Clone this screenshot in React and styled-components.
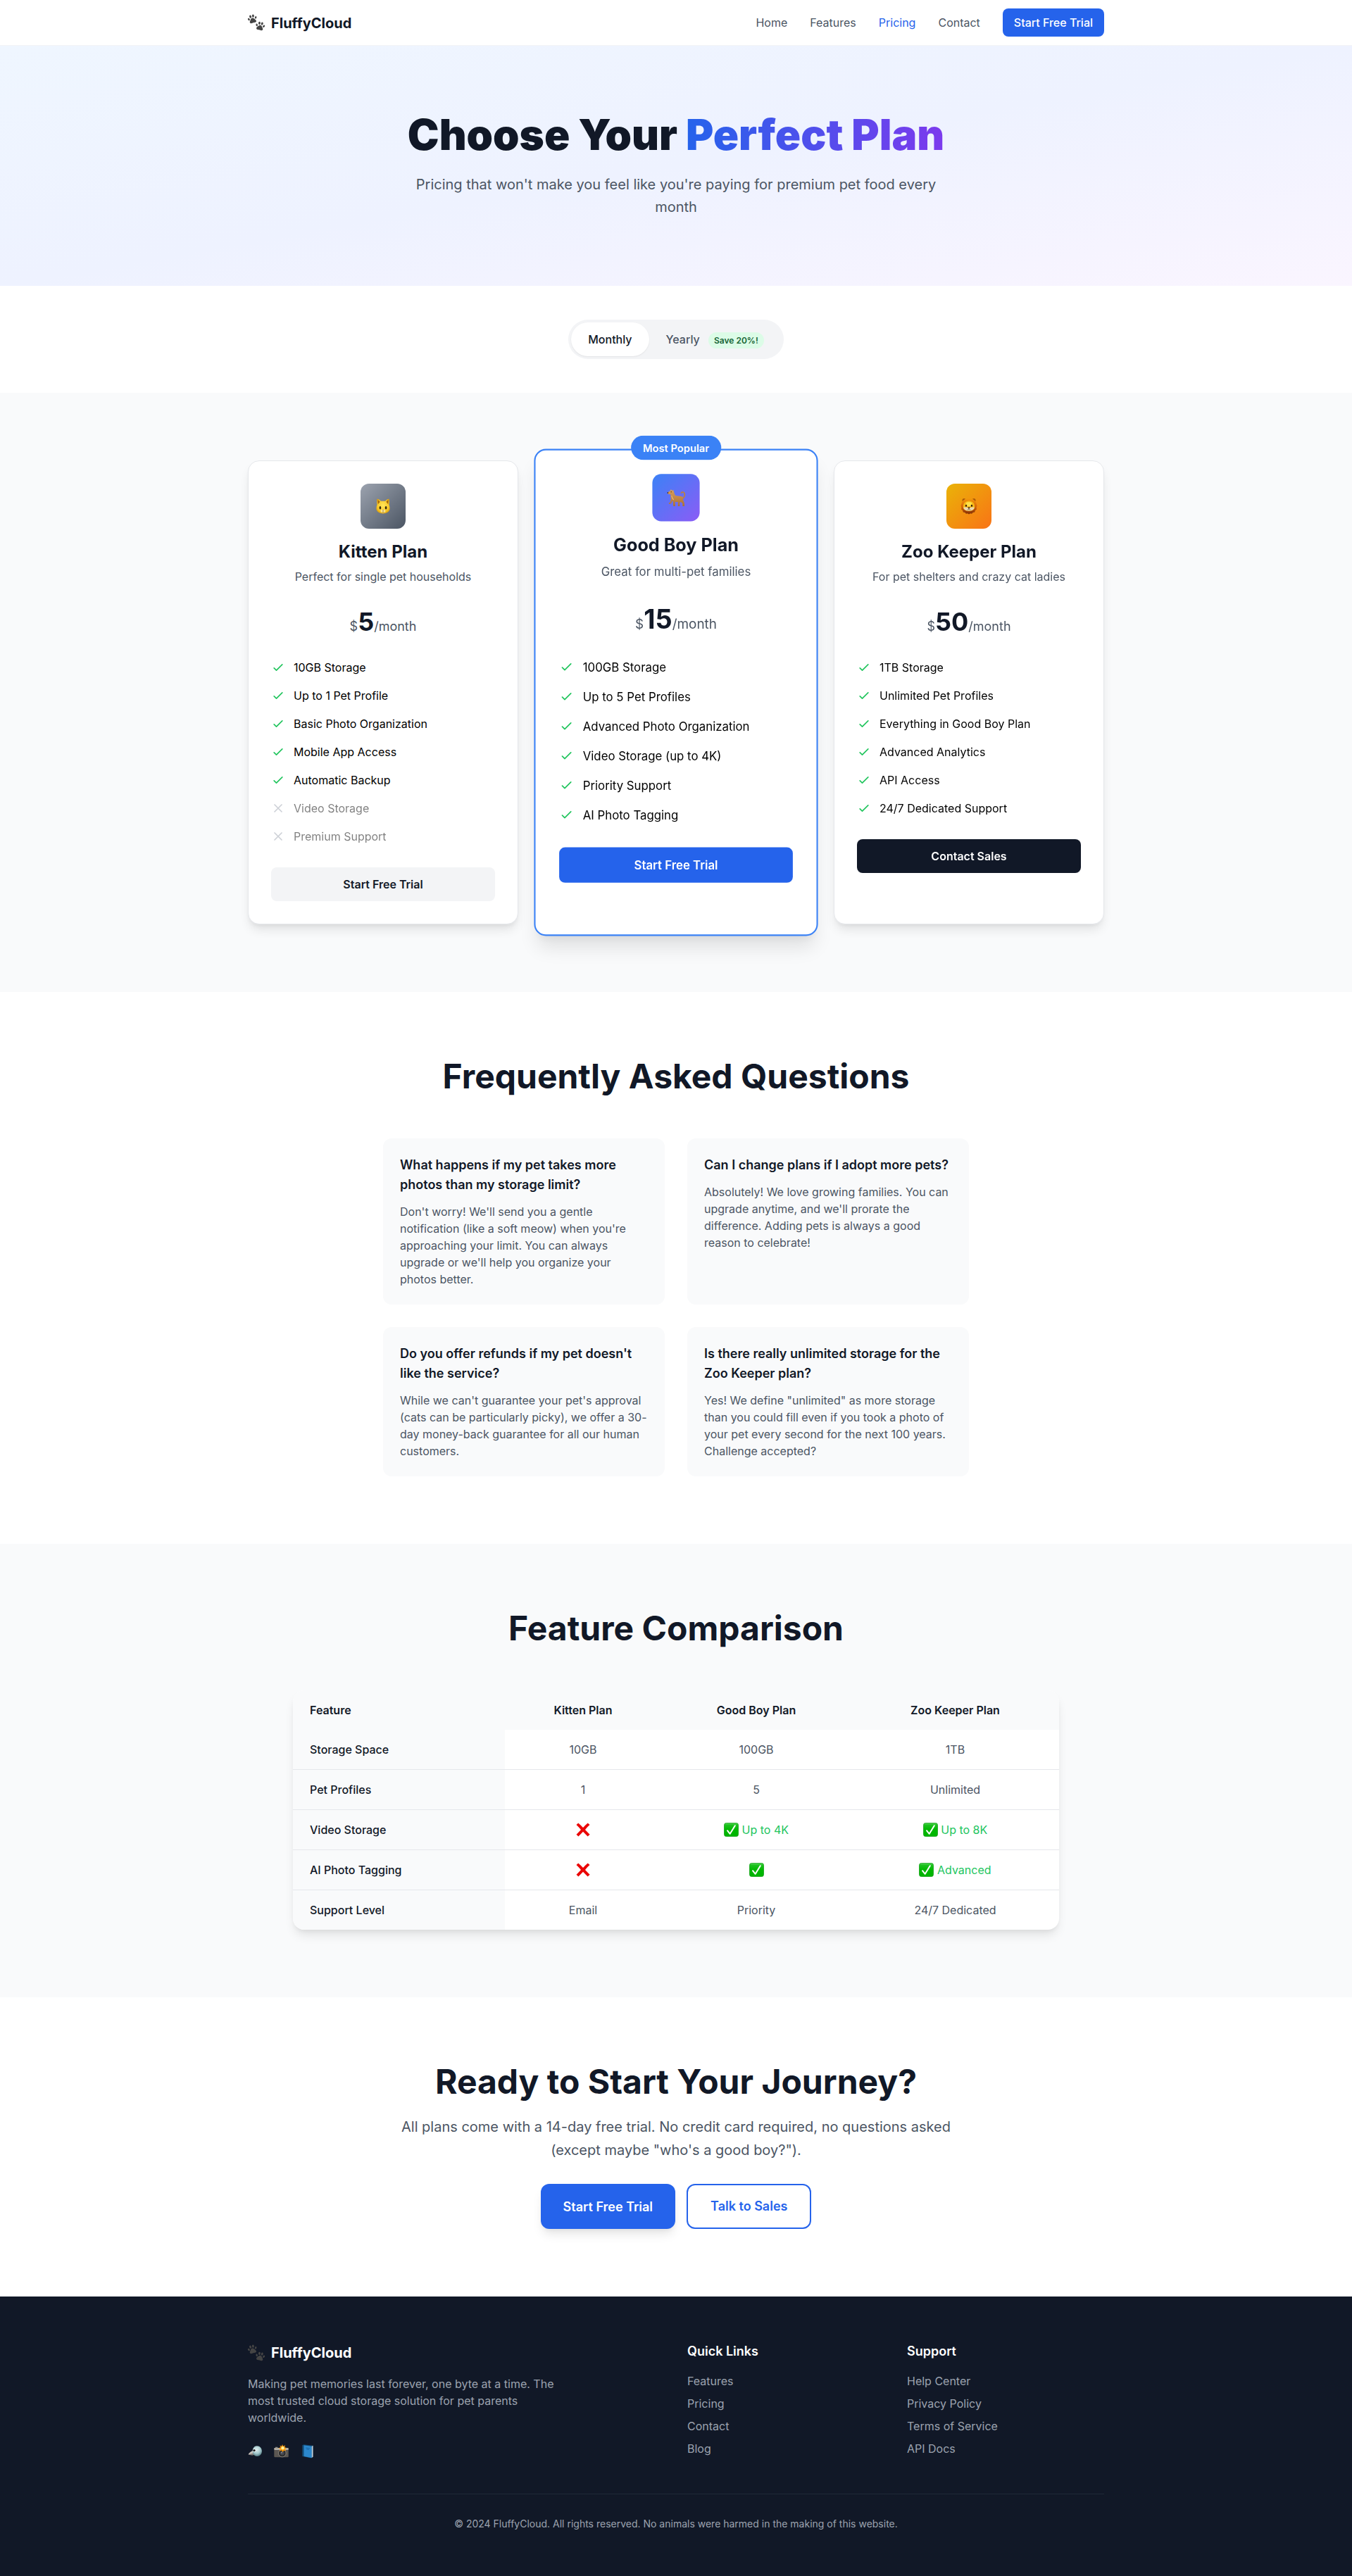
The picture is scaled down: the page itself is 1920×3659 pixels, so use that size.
import React, { useState } from "react";
import styled, { createGlobalStyle, css } from "styled-components";

const c = {
  ink: "#111827",
  body: "#4b5563",
  muted: "#9ca3af",
  line: "#e5e7eb",
  soft: "#f3f4f6",
  tint: "#f9fafb",
  blue: "#2563eb",
  sky: "#3b82f6",
  green: "#22c55e",
};

const GlobalStyle = createGlobalStyle`
  *, *::before, *::after { box-sizing: border-box; margin: 0; padding: 0; }
  body {
    margin: 0;
    background: #fff;
    color: #000;
    font-family: Inter, "Liberation Sans", sans-serif;
    font-size: 16px;
    line-height: 24px;
  }
  a { color: inherit; text-decoration: none; }
  ul { list-style: none; }
  svg { display: block; flex-shrink: 0; }
`;

/* ---------- shared ---------- */

const Container = styled.div`
  width: 100%;
  max-width: ${(p) => p.$max || 1280}px;
  margin: 0 auto;
  padding: 0 32px;
`;

const Section = styled.section`
  padding: 96px 0;
  background: ${(p) => (p.$tinted ? c.tint : "#fff")};
`;

const SectionTitle = styled.h2`
  font-size: 48px;
  line-height: 48px;
  font-weight: 700;
  color: ${c.ink};
  text-align: center;
  margin-bottom: ${(p) => p.$gap || 64}px;
`;

const Lead = styled.p`
  max-width: ${(p) => p.$max}px;
  margin: 0 auto;
  font-size: 20px;
  line-height: 32.5px;
  color: ${c.body};
  text-align: center;
`;

/* ---------- pictograms ---------- */

const Paw = ({ transform }) => (
  <g transform={transform}>
    <ellipse cx="-5.2" cy="-0.6" rx="1.25" ry="1.8" transform="rotate(-22 -5.2 -0.6)" />
    <ellipse cx="-2.2" cy="-3.9" rx="1.45" ry="2.05" transform="rotate(-8 -2.2 -3.9)" />
    <ellipse cx="1.7" cy="-4.1" rx="1.45" ry="2.05" transform="rotate(8 1.7 -4.1)" />
    <ellipse cx="4.9" cy="-1.2" rx="1.25" ry="1.8" transform="rotate(24 4.9 -1.2)" />
    <path d="M-.1-1.5c1.800 0 2.700 1.500 3.500 2.700.9 1.200 1.600 2.100 1.200 3.200-.5 1.400-2 1.300-3.300 1-.9-.2-1.700-.2-2.600.1-1.400.4-2.900.2-3.300-1.100-.4-1.300.4-2.100 1.200-3.200C-2.600.1-1.900-1.500-.1-1.500z" />
  </g>
);

const Paws = () => (
  <svg width="24" height="24" viewBox="0 0 24 24" fill="#454545">
    <Paw transform="translate(6.6 7) rotate(-12)" />
    <Paw transform="translate(17.6 17.2) rotate(14)" />
  </svg>
);

const CatFace = () => (
  <svg width="20" height="24" viewBox="0 0 20 24">
    <defs>
      <radialGradient id="catFur" cx="50%" cy="45%" r="60%">
        <stop offset="0" stopColor="#ffe65c" />
        <stop offset=".7" stopColor="#f9c927" />
        <stop offset="1" stopColor="#d99a0c" />
      </radialGradient>
    </defs>
    <path d="M1.500 1.500c2 .3 4 1.500 5.200 3.300h6.600C14.500 3 16.500 1.800 18.500 1.500c.6 3 .4 6-.1 8.500 1 2 1.300 4.500 1.100 6.800-1.300 3.600-5 5.700-9.500 5.700S1.800 20.400.5 16.800C.3 14.500.6 12 1.600 10 1.100 7.500.9 4.500 1.500 1.500z" fill="url(#catFur)" />
    <path d="M2.500 3.300c1.300.5 2.500 1.500 3 2.700L2.800 9.200c-.4-2-.5-4-.3-5.900zM17.500 3.300c-1.300.5-2.500 1.500-3 2.700l2.700 3.200c.4-2 .5-4 .3-5.900z" fill="#a8690d" />
    <ellipse cx="5.900" cy="14.300" rx="1.300" ry="2.200" fill="#33270f" />
    <ellipse cx="14.100" cy="14.300" rx="1.300" ry="2.200" fill="#33270f" />
    <ellipse cx="10" cy="19" rx="3.400" ry="2.300" fill="#ffe88c" />
    <path d="M8.700 17.200h2.600L10 18.800z" fill="#8d6a6a" />
    <path d="M10 18.800v1.200M8.300 20.400c.8.4 1.400.1 1.700-.4.3.5.900.8 1.700.4" stroke="#7c5d2b" strokeWidth=".6" fill="none" />
  </svg>
);

const Dog = () => (
  <svg width="25" height="25" viewBox="0 0 25 25">
    <defs>
      <linearGradient id="dogCoat" x1="0" y1="0" x2="0" y2="1">
        <stop offset="0" stopColor="#dba05a" />
        <stop offset="1" stopColor="#ab6f35" />
      </linearGradient>
    </defs>
    <path d="M20.500 13.500c3-1.500 4.300-5.500 2.600-8-1-1.500-3.200-1.500-4 .1" stroke="#bd8040" strokeWidth="1.700" strokeLinecap="round" fill="none" />
    <path d="M5.200.700l1.700 2 1.500-1.300.8 3.100c.6 1.600 1 3.300 2 4.600 2.400 1 5.600.6 8.300 1.100 1.600.4 2.300 1.900 2 3.700-.2 1.500.7 2.800 1.400 4.300.6 1.600.6 3.500.5 5.300h-2.500l-.1-3.600-2.700-2.300-1.200 2 .3 3.900h-2.600l.1-5.700c-1.300.2-2.600.1-3.900-.2l.2 5.900H8.400l-.5-6.500-1-.5-1.400 3.400-2.900.8-.3-1.600 1.900-.7 1-4.600c-.5-2-.5-3.800-.3-5.800L1.200 7.100.3 5.100l3.600-1.900z" fill="url(#dogCoat)" />
    <circle cx="5.500" cy="4.200" r=".55" fill="#2b1a0b" />
    <circle cx=".9" cy="5.400" r=".8" fill="#3a2412" />
    <path d="M6 9.500c.5 2.200 1.300 4.100 2.800 5.500" stroke="#e6b676" strokeWidth="1.100" fill="none" />
  </svg>
);

const Lion = () => (
  <svg width="24" height="24" viewBox="0 0 24 24">
    <defs>
      <linearGradient id="mane" x1="0" y1="0" x2="0" y2="1">
        <stop offset="0" stopColor="#f49a0b" />
        <stop offset=".5" stopColor="#d9660a" />
        <stop offset="1" stopColor="#7d2c05" />
      </linearGradient>
    </defs>
    <circle cx="5" cy="3.600" r="2.500" fill="#a85a0a" />
    <circle cx="19" cy="3.600" r="2.500" fill="#a85a0a" />
    <path d="M12 .800c5.500 0 9.600 3.300 10.400 7.200l1.100 3.500-.9 2.300.3 2.600-2 1.600-.7 2.500-2.600.5-1.500 1.800-2.200-.6L12 23.600l-1.900-1.400-2.200.6-1.500-1.800-2.600-.5-.7-2.500-2-1.600.3-2.600-.9-2.300L1.600 8C2.400 4.100 6.500.8 12 .800z" fill="url(#mane)" />
    <path d="M12 4.500c4.900 0 8.200 3.600 8.200 8.200 0 3.900-3.300 6.300-8.200 6.300s-8.200-2.400-8.200-6.300C3.800 8.100 7.100 4.500 12 4.500z" fill="#f7b917" />
    <path d="M7.500 7.500C9 5.900 15 5.900 16.500 7.500L14 12h-4z" fill="#ffe04a" />
    <path d="M4.300 13.700c2.200-.6 5 .2 7.700.2s5.500-.8 7.700-.2c-.6 3.300-3.700 4.900-7.700 4.900s-7.100-1.600-7.700-4.900z" fill="#ead9b4" />
    <ellipse cx="8" cy="11.300" rx="1.100" ry="1.500" fill="#2d1a08" />
    <ellipse cx="16" cy="11.300" rx="1.100" ry="1.500" fill="#2d1a08" />
    <path d="M10 13.600h4l-2 2.300z" fill="#40240f" />
    <path d="M12 15.600v1.100M9.500 17c1 .6 2 .4 2.500-.4.500.8 1.500 1 2.500.4" stroke="#6b4a2c" strokeWidth=".7" fill="none" />
  </svg>
);

const CrossMark = () => (
  <svg width="20" height="20" viewBox="0 0 20 20">
    <path d="M3.200.400C5.400 2.300 7.800 4.600 10 7 12.200 4.500 14.500 2.200 16.700.400L19.500 3c-2.300 2-4.600 4.400-6.500 7 2.200 2.300 4.600 4.600 6.600 6.700l-3 2.900C14.600 17.500 12.200 15 10 12.700 7.800 15 5.500 17.500 3.400 19.600L.5 16.800C2.500 14.700 4.800 12.400 7 10 4.900 7.600 2.600 5.200.5 3.100z" fill="#ea0606" />
  </svg>
);

const TickBox = () => (
  <svg width="21" height="20" viewBox="0 0 21 20">
    <defs>
      <linearGradient id="tickFill" x1="0" y1="0" x2="0" y2="1">
        <stop offset="0" stopColor="#58d65a" />
        <stop offset=".16" stopColor="#1cc11e" />
        <stop offset=".5" stopColor="#00b800" />
        <stop offset="1" stopColor="#00b300" />
      </linearGradient>
    </defs>
    <rect x=".5" y=".4" width="20" height="19.200" rx="3" fill="url(#tickFill)" stroke="#12a015" strokeWidth=".8" />
    <path d="M5 11.200l3.700 4.600L15.800 4.200" stroke="#fff" strokeWidth="2" strokeLinecap="round" strokeLinejoin="round" fill="none" />
  </svg>
);

const Bird = () => (
  <svg width="21" height="20" viewBox="0 0 21 20">
    <defs>
      <radialGradient id="birdHead" cx="45%" cy="35%" r="65%">
        <stop offset="0" stopColor="#dff0f0" />
        <stop offset=".6" stopColor="#a4c8cc" />
        <stop offset="1" stopColor="#547d84" />
      </radialGradient>
    </defs>
    <path d="M7.500 8.500C4.500 9.800 2 12 .6 14.300c2.300.9 5.600 1.300 8.600.4z" fill="#c9c3bd" />
    <path d="M.6 14.300c2.600-.4 5-.9 7.500-1.800l.8 2.300c-2.900.8-6 .4-8.300-.5z" fill="#837c77" />
    <path d="M12.800 2.200c4.300 0 7.200 3.300 7.200 7.300 0 4.300-2.900 7.500-7 7.500-3.400 0-6.300-2.700-6.300-7.200 0-4.300 2.400-7.600 6.100-7.600z" fill="url(#birdHead)" />
    <circle cx="9.300" cy="8.500" r="2.300" fill="#fff" />
    <circle cx="9" cy="8.600" r="1.700" fill="#1a1a1a" />
  </svg>
);

const Camera = () => (
  <svg width="21" height="20" viewBox="0 0 21 20">
    <rect x=".3" y="5" width="20.400" height="13.300" rx="1.200" fill="#5b5752" />
    <rect x=".3" y="5" width="20.400" height="3" rx="1" fill="#b6b0a6" />
    <rect x="2" y="3.800" width="3.400" height="1.800" fill="#8e8a84" />
    <circle cx="11.800" cy="12.600" r="5.300" fill="#2a2a2b" stroke="#9a958e" strokeWidth=".8" />
    <circle cx="11.800" cy="12.600" r="3" fill="#45484e" />
    <circle cx="11" cy="11.800" r="1" fill="#878c96" />
    <path d="M12 0l1.300 2.700L16 1.300l-.8 2.900 3 .7-2.400 1.700 1.300 2.600-3-.5-1.600 2.200-1.500-2.300-3 .8 1.200-2.700-2.500-1.500 2.900-.9L8.300 1.500l2.700 1.200z" fill="#ff9a0a" />
    <circle cx="12.600" cy="5.300" r="2.200" fill="#fff29a" />
  </svg>
);

const Book = () => (
  <svg width="21" height="20" viewBox="0 0 21 20">
    <path d="M3.200 1.200L5.500.300l13 1.400v16.100l-2.900 1.700L3.200 17z" fill="#12476f" />
    <path d="M16.400 3l2.100-1.300v16.100l-2.100 1.400z" fill="#c6ced6" />
    <path d="M5.500 1.200l11.100 1.600v16.400L5.500 17z" fill="#2b87cc" />
    <path d="M8.300 5l5.600.8M9.300 7l3.600.5" stroke="#175f9c" strokeWidth=".9" />
  </svg>
);

const StatusIcon = ({ included }) => (
  <svg
    width="20"
    height="20"
    viewBox="0 0 24 24"
    fill="none"
    stroke={included ? c.green : c.muted}
    strokeWidth="2"
    strokeLinecap="round"
    strokeLinejoin="round"
  >
    <path d={included ? "M5 13l4 4L19 7" : "M6 18L18 6M6 6l12 12"} />
  </svg>
);

/* ---------- navigation ---------- */

const NavBar = styled.nav`
  background: #fff;
  border-bottom: 1px solid ${c.soft};
`;

const NavInner = styled(Container)`
  height: 64px;
  display: flex;
  align-items: center;
  justify-content: space-between;
`;

const Brand = styled.a`
  display: flex;
  align-items: center;
  gap: 9px;
  height: 32px;
  font-size: 20px;
  line-height: 28px;
  font-weight: 700;
  color: ${(p) => (p.$light ? "#fff" : c.ink)};
`;

const BrandName = styled.span`
  padding-top: ${(p) => p.$drop || 0}px;
`;

const NavLinks = styled.div`
  display: flex;
  align-items: center;
  gap: 32px;
`;

const NavLink = styled.a`
  color: ${(p) => (p.$active ? c.blue : c.body)};
`;

const NavButton = styled.a`
  padding: 8px 16px;
  border-radius: 8px;
  background: ${c.blue};
  color: #fff;
  font-weight: 500;
`;

/* ---------- hero ---------- */

const Hero = styled.header`
  padding: 96px 0 95.5px;
  background: linear-gradient(to bottom right, #eff6ff, #eef2ff, #faf5ff);
`;

const HeroTitle = styled.h1`
  font-size: 60px;
  line-height: 60px;
  font-weight: 900;
  color: ${c.ink};
  text-align: center;
  margin-bottom: 24.5px;
`;

const GradientText = styled.span`
  background: linear-gradient(to right, #2563eb, #7c3aed);
  -webkit-background-clip: text;
  background-clip: text;
  color: transparent;
`;

/* ---------- billing toggle ---------- */

const BillingSection = styled.section`
  display: flex;
  justify-content: center;
  padding: 48px 0;
`;

const Toggle = styled.div`
  display: flex;
  padding: 4px;
  border-radius: 28px;
  background: ${c.soft};
`;

const ToggleOption = styled.button`
  border: 0;
  border-radius: 24px;
  padding: 12px 24px;
  font: inherit;
  font-weight: 500;
  cursor: pointer;
  background: transparent;
  color: ${c.body};
  ${(p) =>
    p.$on &&
    css`
      background: #fff;
      color: ${c.ink};
      box-shadow: 0 1px 2px rgba(0, 0, 0, 0.07);
    `}
`;

const SaveBadge = styled.span`
  margin-left: 8px;
  padding: 4px 8px;
  border-radius: 12px;
  background: #dcfce7;
  color: #166534;
  font-size: 12px;
  line-height: 16px;
  font-weight: 600;
`;

/* ---------- plans ---------- */

const PlanGrid = styled.div`
  display: grid;
  grid-template-columns: repeat(3, 1fr);
  gap: 32px;
`;

const Plan = styled.article`
  position: relative;
  padding: 32px;
  border: 1px solid ${c.line};
  border-radius: 16px;
  background: #fff;
  box-shadow: 0 10px 15px -3px rgba(0, 0, 0, 0.1), 0 4px 6px -2px rgba(0, 0, 0, 0.05);
  ${(p) =>
    p.$featured &&
    css`
      border: 2px solid ${c.sky};
      transform: scale(1.05);
      box-shadow: 0 20px 25px -5px rgba(0, 0, 0, 0.1), 0 10px 10px -5px rgba(0, 0, 0, 0.04);
    `}
`;

const RibbonWrap = styled.div`
  position: absolute;
  top: -16px;
  left: 50%;
  transform: translateX(-50%);
  white-space: nowrap;
`;

const Ribbon = styled.span`
  padding: 8px 16px;
  border-radius: 20px;
  background: ${c.sky};
  color: #fff;
  font-size: 14px;
  line-height: 20px;
  font-weight: 600;
`;

const PlanHead = styled.div`
  display: flex;
  flex-direction: column;
  align-items: center;
  text-align: center;
  margin-bottom: 32px;
`;

const PlanIcon = styled.div`
  width: 64px;
  height: 64px;
  margin-bottom: 17px;
  border-radius: 12px;
  display: flex;
  align-items: center;
  justify-content: center;
  background: linear-gradient(135deg, ${(p) => p.$from}, ${(p) => p.$to});
`;

const PlanName = styled.h3`
  font-size: 24px;
  line-height: 32px;
  font-weight: 700;
  color: ${c.ink};
  margin-bottom: 7px;
`;

const PlanNote = styled.p`
  color: ${c.body};
  margin-bottom: 32px;
`;

const Price = styled.div`
  display: flex;
  align-items: baseline;
  height: 41px;
`;

const Unit = styled.span`
  font-size: 18px;
  line-height: 28px;
  color: ${c.body};
`;

const Amount = styled.span`
  font-size: 36px;
  line-height: 40px;
  font-weight: 700;
  color: ${c.ink};
`;

const Perks = styled.ul`
  display: flex;
  flex-direction: column;
  gap: 16px;
  margin-bottom: 32px;
`;

const Perk = styled.li`
  display: flex;
  align-items: center;
  gap: 12px;
  opacity: ${(p) => (p.$off ? 0.5 : 1)};
`;

const planTones = {
  plain: css`
    background: ${c.soft};
    color: ${c.ink};
  `,
  primary: css`
    background: ${c.blue};
    color: #fff;
  `,
  dark: css`
    background: ${c.ink};
    color: #fff;
  `,
};

const PlanButton = styled.a`
  display: block;
  padding: 12px 24px;
  border-radius: 8px;
  font-weight: 600;
  text-align: center;
  ${(p) => planTones[p.$tone]}
`;

/* ---------- faq ---------- */

const FaqGrid = styled.div`
  display: grid;
  grid-template-columns: 1fr 1fr;
  gap: 32px;
`;

const FaqCard = styled.div`
  padding: 24px;
  border-radius: 12px;
  background: ${c.tint};
`;

const Question = styled.h3`
  font-size: 18px;
  line-height: 28px;
  font-weight: 600;
  color: ${c.ink};
  margin-bottom: 12px;
`;

const Answer = styled.p`
  color: ${c.body};
`;

/* ---------- comparison ---------- */

const TableCard = styled.div`
  border-radius: 16px;
  overflow: hidden;
  background: #fff;
  box-shadow: 0 10px 15px -3px rgba(0, 0, 0, 0.1), 0 4px 6px -2px rgba(0, 0, 0, 0.05);
`;

const Table = styled.table`
  width: 100%;
  table-layout: fixed;
  border-collapse: separate;
  border-spacing: 0;
`;

const Col = styled.col`
  width: ${(p) => p.$w}px;
`;

const HeadCell = styled.th`
  padding: 16px 24px;
  background: ${c.tint};
  color: ${c.ink};
  font-weight: 600;
  text-align: ${(p) => (p.$first ? "left" : "center")};
`;

const Row = styled.tr`
  &:not(:last-child) > * {
    border-bottom: 1px solid ${c.line};
  }
`;

const RowLabel = styled.th`
  padding: 16px 24px;
  background: ${c.tint};
  color: ${c.ink};
  font-weight: 500;
  text-align: left;
`;

const Cell = styled.td`
  padding: 16px 24px;
  text-align: center;
  color: ${c.body};
`;

const Mark = styled.div`
  display: flex;
  align-items: center;
  justify-content: center;
  gap: 4.5px;
  height: 24px;
  color: ${c.green};
`;

/* ---------- call to action ---------- */

const Actions = styled.div`
  display: flex;
  justify-content: center;
  gap: 16px;
  margin-top: 32px;
`;

const ActionButton = styled.a`
  display: flex;
  align-items: center;
  height: 64px;
  border-radius: 12px;
  font-size: 18px;
  line-height: 28px;
  font-weight: 600;
  ${(p) =>
    p.$outline
      ? css`
          padding: 0 32px;
          border: 2px solid ${c.blue};
          color: ${c.blue};
        `
      : css`
          padding: 1px 32px 0;
          background: ${c.blue};
          color: #fff;
          box-shadow: 0 10px 15px -3px rgba(0, 0, 0, 0.1), 0 4px 6px -2px rgba(0, 0, 0, 0.05);
        `}
`;

/* ---------- footer ---------- */

const Footer = styled.footer`
  padding: 64px 0;
  background: ${c.ink};
  color: #fff;
`;

const FooterGrid = styled.div`
  display: grid;
  grid-template-columns: repeat(4, 1fr);
  gap: 32px;
  margin-bottom: 48px;
`;

const About = styled.div`
  grid-column: span 2;
`;

const AboutText = styled.p`
  max-width: 448px;
  margin: 16px 0 24px;
  color: ${c.muted};
`;

const Socials = styled.div`
  display: flex;
  align-items: center;
  gap: 16px;
  height: 24px;
`;

const FooterHeading = styled.h4`
  font-size: 18px;
  line-height: 28px;
  font-weight: 600;
  margin-bottom: 16px;
`;

const FooterLinks = styled.ul`
  display: flex;
  flex-direction: column;
  gap: 8px;
  color: ${c.muted};
`;

const Copyright = styled.p`
  padding-top: 32px;
  border-top: 1px solid #1f2937;
  font-size: 14px;
  line-height: 20px;
  color: ${c.muted};
  text-align: center;
`;

/* ---------- data ---------- */

const plans = [
  {
    name: "Kitten Plan",
    note: "Perfect for single pet households",
    price: "5",
    icon: <CatFace />,
    from: "#9ca3af",
    to: "#4b5563",
    perks: ["10GB Storage", "Up to 1 Pet Profile", "Basic Photo Organization", "Mobile App Access", "Automatic Backup"],
    missing: ["Video Storage", "Premium Support"],
    action: "Start Free Trial",
    tone: "plain",
  },
  {
    name: "Good Boy Plan",
    note: "Great for multi-pet families",
    price: "15",
    icon: <Dog />,
    from: "#3b82f6",
    to: "#8b5cf6",
    perks: [
      "100GB Storage",
      "Up to 5 Pet Profiles",
      "Advanced Photo Organization",
      "Video Storage (up to 4K)",
      "Priority Support",
      "AI Photo Tagging",
    ],
    missing: [],
    action: "Start Free Trial",
    tone: "primary",
    ribbon: "Most Popular",
  },
  {
    name: "Zoo Keeper Plan",
    note: "For pet shelters and crazy cat ladies",
    price: "50",
    icon: <Lion />,
    from: "#eab308",
    to: "#f97316",
    perks: [
      "1TB Storage",
      "Unlimited Pet Profiles",
      "Everything in Good Boy Plan",
      "Advanced Analytics",
      "API Access",
      "24/7 Dedicated Support",
    ],
    missing: [],
    action: "Contact Sales",
    tone: "dark",
  },
];

const faqs = [
  [
    "What happens if my pet takes more photos than my storage limit?",
    "Don't worry! We'll send you a gentle notification (like a soft meow) when you're approaching your limit. You can always upgrade or we'll help you organize your photos better.",
  ],
  [
    "Can I change plans if I adopt more pets?",
    "Absolutely! We love growing families. You can upgrade anytime, and we'll prorate the difference. Adding pets is always a good reason to celebrate!",
  ],
  [
    "Do you offer refunds if my pet doesn't like the service?",
    "While we can't guarantee your pet's approval (cats can be particularly picky), we offer a 30-day money-back guarantee for all our human customers.",
  ],
  [
    "Is there really unlimited storage for the Zoo Keeper plan?",
    'Yes! We define "unlimited" as more storage than you could fill even if you took a photo of your pet every second for the next 100 years. Challenge accepted?',
  ],
];

const yes = (text) => ({ yes: true, text });
const no = { yes: false };

const comparison = [
  ["Storage Space", "10GB", "100GB", "1TB"],
  ["Pet Profiles", "1", "5", "Unlimited"],
  ["Video Storage", no, yes("Up to 4K"), yes("Up to 8K")],
  ["AI Photo Tagging", no, yes(), yes("Advanced")],
  ["Support Level", "Email", "Priority", "24/7 Dedicated"],
];

const CellContent = ({ value }) => {
  if (typeof value === "string") return value;
  return (
    <Mark>
      {value.yes ? <TickBox /> : <CrossMark />}
      {value.text && <span>{value.text}</span>}
    </Mark>
  );
};

const PlanCard = ({ plan }) => (
  <Plan $featured={!!plan.ribbon}>
    {plan.ribbon && (
      <RibbonWrap>
        <Ribbon>{plan.ribbon}</Ribbon>
      </RibbonWrap>
    )}
    <PlanHead>
      <PlanIcon $from={plan.from} $to={plan.to}>
        {plan.icon}
      </PlanIcon>
      <PlanName>{plan.name}</PlanName>
      <PlanNote>{plan.note}</PlanNote>
      <Price>
        <Unit>$</Unit>
        <Amount>{plan.price}</Amount>
        <Unit>/month</Unit>
      </Price>
    </PlanHead>
    <Perks>
      {plan.perks.map((perk) => (
        <Perk key={perk}>
          <StatusIcon included />
          <span>{perk}</span>
        </Perk>
      ))}
      {plan.missing.map((perk) => (
        <Perk key={perk} $off>
          <StatusIcon included={false} />
          <span>{perk}</span>
        </Perk>
      ))}
    </Perks>
    <PlanButton href="#" $tone={plan.tone}>
      {plan.action}
    </PlanButton>
  </Plan>
);

const LinkColumn = ({ title, links }) => (
  <div>
    <FooterHeading>{title}</FooterHeading>
    <FooterLinks>
      {links.map((l) => (
        <li key={l}>
          <a href="#">{l}</a>
        </li>
      ))}
    </FooterLinks>
  </div>
);

export default function App() {
  const [yearly, setYearly] = useState(false);
  return (
    <>
      <GlobalStyle />
      <NavBar>
        <NavInner>
          <Brand href="#">
            <Paws />
            <BrandName $drop={2}>FluffyCloud</BrandName>
          </Brand>
          <NavLinks>
            <NavLink href="#">Home</NavLink>
            <NavLink href="#">Features</NavLink>
            <NavLink href="#" $active>
              Pricing
            </NavLink>
            <NavLink href="#">Contact</NavLink>
            <NavButton href="#">Start Free Trial</NavButton>
          </NavLinks>
        </NavInner>
      </NavBar>

      <Hero>
        <HeroTitle>
          Choose Your <GradientText>Perfect Plan</GradientText>
        </HeroTitle>
        <Lead $max={768}>
          Pricing that won't make you feel like you're paying for premium pet food every month
        </Lead>
      </Hero>

      <BillingSection>
        <Toggle>
          <ToggleOption $on={!yearly} onClick={() => setYearly(false)}>
            Monthly
          </ToggleOption>
          <ToggleOption $on={yearly} onClick={() => setYearly(true)}>
            Yearly <SaveBadge>Save 20%!</SaveBadge>
          </ToggleOption>
        </Toggle>
      </BillingSection>

      <Section $tinted>
        <Container>
          <PlanGrid>
            {plans.map((p) => (
              <PlanCard key={p.name} plan={p} />
            ))}
          </PlanGrid>
        </Container>
      </Section>

      <Section>
        <Container $max={896}>
          <SectionTitle>Frequently Asked Questions</SectionTitle>
          <FaqGrid>
            {faqs.map(([q, a]) => (
              <FaqCard key={q}>
                <Question>{q}</Question>
                <Answer>{a}</Answer>
              </FaqCard>
            ))}
          </FaqGrid>
        </Container>
      </Section>

      <Section $tinted>
        <Container $max={1152}>
          <SectionTitle>Feature Comparison</SectionTitle>
          <TableCard>
            <Table>
              <colgroup>
                <Col $w={301} />
                <Col $w={222} />
                <Col $w={270} />
                <Col $w={295} />
              </colgroup>
              <thead>
                <tr>
                  <HeadCell $first>Feature</HeadCell>
                  {plans.map((p) => (
                    <HeadCell key={p.name}>{p.name}</HeadCell>
                  ))}
                </tr>
              </thead>
              <tbody>
                {comparison.map(([label, ...values]) => (
                  <Row key={label}>
                    <RowLabel>{label}</RowLabel>
                    {values.map((v, i) => (
                      <Cell key={i}>
                        <CellContent value={v} />
                      </Cell>
                    ))}
                  </Row>
                ))}
              </tbody>
            </Table>
          </TableCard>
        </Container>
      </Section>

      <Section>
        <Container $max={896}>
          <SectionTitle $gap={24}>Ready to Start Your Journey?</SectionTitle>
          <Lead $max={832}>
            All plans come with a 14-day free trial. No credit card required, no questions asked
            (except maybe "who's a good boy?").
          </Lead>
          <Actions>
            <ActionButton href="#">Start Free Trial</ActionButton>
            <ActionButton href="#" $outline>
              Talk to Sales
            </ActionButton>
          </Actions>
        </Container>
      </Section>

      <Footer>
        <Container>
          <FooterGrid>
            <About>
              <Brand href="#" $light>
                <Paws />
                <BrandName>FluffyCloud</BrandName>
              </Brand>
              <AboutText>
                Making pet memories last forever, one byte at a time. The most trusted cloud storage
                solution for pet parents worldwide.
              </AboutText>
              <Socials>
                <Bird />
                <Camera />
                <Book />
              </Socials>
            </About>
            <LinkColumn title="Quick Links" links={["Features", "Pricing", "Contact", "Blog"]} />
            <LinkColumn
              title="Support"
              links={["Help Center", "Privacy Policy", "Terms of Service", "API Docs"]}
            />
          </FooterGrid>
          <Copyright>
            © 2024 FluffyCloud. All rights reserved. No animals were harmed in the making of this
            website.
          </Copyright>
        </Container>
      </Footer>
    </>
  );
}
